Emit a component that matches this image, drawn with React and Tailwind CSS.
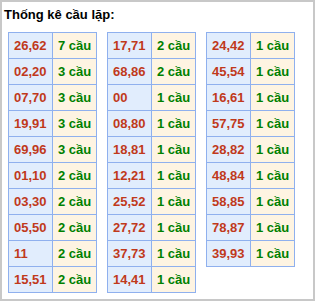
import React from 'react';

// Thống kê cầu lặp - ba bảng
const tables = [
  [
    ['26,62', 7], ['02,20', 3], ['07,70', 3], ['19,91', 3], ['69,96', 3],
    ['01,10', 2], ['03,30', 2], ['05,50', 2], ['11', 2], ['15,51', 2],
  ],
  [
    ['17,71', 2], ['68,86', 2], ['00', 1], ['08,80', 1], ['18,81', 1],
    ['12,21', 1], ['25,52', 1], ['27,72', 1], ['37,73', 1], ['14,41', 1],
  ],
  [
    ['24,42', 1], ['45,54', 1], ['16,61', 1], ['57,75', 1], ['28,82', 1],
    ['48,84', 1], ['58,85', 1], ['78,87', 1], ['39,93', 1],
  ],
];

function CauTable({ rows }) {
  return (
    <table className="border-collapse">
      <tbody>
        {rows.map(([pair, count]) => (
          <tr key={pair} className="h-[26px]">
            <td className="w-[44px] border border-[#8fb0ee] bg-[#e1edfd] pl-[5px] pr-0 py-0 text-[#c0391b] font-bold">
              {pair}
            </td>
            <td className="w-[44px] border border-[#8fb0ee] bg-[#fef4e2] pl-[5px] pr-0 py-0 text-[#008000] font-bold">
              {count} cầu
            </td>
          </tr>
        ))}
      </tbody>
    </table>
  );
}

export default function App() {
  return (
    <div className="w-[315px] h-[301px] border-2 border-[#c8c8c8] bg-white font-['Liberation_Sans',Arial,sans-serif] text-[13px] leading-[15px]">
      <div className="pt-[5px] pl-[2px] font-bold text-black">Thống kê cầu lặp:</div>
      <div className="flex items-start gap-[10px] pl-[6px] mt-[10px]">
        {tables.map((rows, i) => (
          <CauTable key={i} rows={rows} />
        ))}
      </div>
    </div>
  );
}
